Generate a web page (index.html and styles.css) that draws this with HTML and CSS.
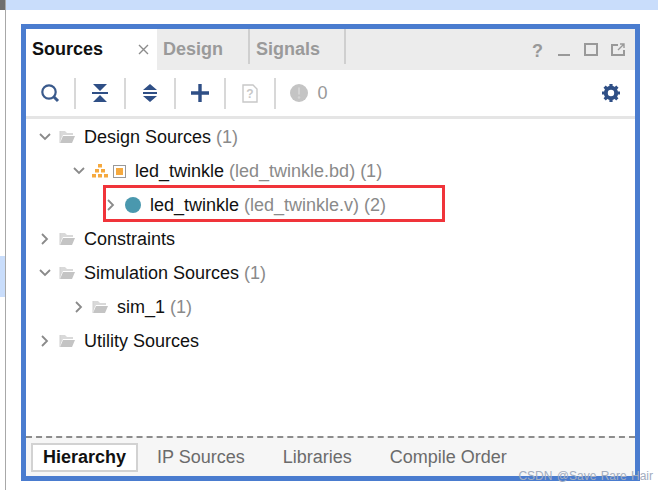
FILE: index.html
```html
<!DOCTYPE html>
<html lang="en">
<head>
    <meta charset="UTF-8">
    <meta name="viewport" content="width=device-width, initial-scale=1.0">
    <title>Sources</title>
    <link rel="stylesheet" href="styles.css">
</head>
<body>
    <svg class="sprites" width="0" height="0">
        <symbol id="folder" viewBox="0 0 17 14">
            <path d="M1 1h5l2 2h6v2H4L1 11z" fill="#d9d9d9"/>
            <path d="M4 6h12l-3 7H1z" fill="#c4c4c4"/>
            <path d="M1 1v12" stroke="#cfcfcf" fill="none"/>
        </symbol>
        <symbol id="open" viewBox="0 0 14 14">
            <path d="M2 4l5 5 5-5" fill="none" stroke="#8a8a8a" stroke-width="1.8"/>
        </symbol>
        <symbol id="closed" viewBox="0 0 14 14">
            <path d="M4 2l5 5-5 5" fill="none" stroke="#8a8a8a" stroke-width="1.8"/>
        </symbol>
    </svg>

    <div class="rail">
        <div class="rail-dark"></div>
        <div class="rail-gap"></div>
        <div class="rail-blue"></div>
    </div>

    <div class="page">
        <div class="top-strip"></div>

        <div class="panel">
            <div class="tabbar">
                <div class="tab active">
                    <span>Sources</span>
                    <svg class="tab-close" width="11" height="11" viewBox="0 0 11 11"><path d="M1 1l9 9M10 1l-9 9" stroke="#8c8c8c" stroke-width="1.4"/></svg>
                </div>
                <div class="tab design">Design</div>
                <div class="tab signals">Signals</div>
                <div class="win-btns">
                    <span class="help">?</span>
                    <svg width="14" height="14" viewBox="0 0 14 14"><path d="M1 12h12" stroke="#999" stroke-width="2"/></svg>
                    <svg width="14" height="14" viewBox="0 0 14 14"><rect x="1" y="1" width="12" height="11" fill="none" stroke="#999" stroke-width="2"/></svg>
                    <svg width="14" height="14" viewBox="0 0 14 14"><path d="M7 2H1v10h12V7" fill="none" stroke="#999" stroke-width="2"/><path d="M7 7l6-6M9 1h4v4" fill="none" stroke="#999" stroke-width="1.4"/></svg>
                </div>
            </div>

            <div class="toolbar">
                <div class="tool">
                    <svg width="20" height="20" viewBox="0 0 20 20"><circle cx="9" cy="9" r="6.7" fill="none" stroke="#3a5a8c" stroke-width="2.2"/><path d="M14 14l4 4" stroke="#3a5a8c" stroke-width="3"/></svg>
                </div>
                <div class="tool">
                    <svg width="16" height="18" viewBox="0 0 16 18"><path d="M1 0h14L8 7zM0 8h16v2H0zM8 11l7 7H1z" fill="#2f4f86"/></svg>
                </div>
                <div class="tool">
                    <svg width="16" height="20" viewBox="0 0 16 20"><path d="M8 1l7 6H1zM1 9h14v2H1zM1 13h14l-7 6z" fill="#2f4f86"/></svg>
                </div>
                <div class="tool">
                    <svg width="20" height="20" viewBox="0 0 20 20"><path d="M10 1v18M1 10h18" stroke="#2f4f86" stroke-width="3.4"/></svg>
                </div>
                <div class="tool">
                    <svg width="16" height="19" viewBox="0 0 16 19"><path d="M1 1h10l4 4v13H1z" fill="none" stroke="#c8c8c8" stroke-width="1.4"/><text x="8" y="14" class="doc-mark">?</text></svg>
                </div>
                <div class="tool last">
                    <svg width="18" height="18" viewBox="0 0 18 18"><circle cx="9" cy="9" r="9" fill="#c4c4c4"/><path d="M9 3.5v7" stroke="#d4d4d4" stroke-width="2"/><circle cx="9" cy="13.5" r="1.2" fill="#d4d4d4"/></svg>
                    <span class="count">0</span>
                </div>
                <svg class="gear" width="20" height="20" viewBox="0 0 20 20">
                    <circle cx="10" cy="10" r="5.2" fill="none" stroke="#2f4f86" stroke-width="4"/>
                    <path d="M10 1v18M1 10h18M3.6 3.6l12.8 12.8M16.4 3.6L3.6 16.4" stroke="#2f4f86" stroke-width="3.2" stroke-dasharray="3.4 11.2"/>
                </svg>
            </div>

            <div class="tree">
                <div class="row">
                    <svg class="chev" width="14" height="14"><use href="#open"/></svg>
                    <svg class="folder" width="17" height="14"><use href="#folder"/></svg>
                    <span class="label">Design Sources</span><span class="note">(1)</span>
                </div>
                <div class="row lvl2">
                    <svg class="chev" width="14" height="14"><use href="#open"/></svg>
                    <svg class="bd-tree" width="16" height="14" viewBox="0 0 16 14"><path d="M6 0h4v3.500H6zM3 5h4v3.500H3zM9 5h4v3.500H9zM0 10h4v3.500H0zM6 10h4v3.500H6zM12 10h4v3.500h-4z" fill="#f5a93f"/></svg>
                    <span class="bd-box"></span>
                    <span class="label">led_twinkle</span><span class="note">(led_twinkle.bd) (1)</span>
                </div>
                <div class="row lvl3">
                    <svg class="chev" width="14" height="14"><use href="#closed"/></svg>
                    <span class="dot"></span>
                    <span class="label">led_twinkle</span><span class="note">(led_twinkle.v) (2)</span>
                </div>
                <div class="row">
                    <svg class="chev" width="14" height="14"><use href="#closed"/></svg>
                    <svg class="folder" width="17" height="14"><use href="#folder"/></svg>
                    <span class="label">Constraints</span>
                </div>
                <div class="row">
                    <svg class="chev" width="14" height="14"><use href="#open"/></svg>
                    <svg class="folder" width="17" height="14"><use href="#folder"/></svg>
                    <span class="label">Simulation Sources</span><span class="note">(1)</span>
                </div>
                <div class="row lvl2">
                    <svg class="chev" width="14" height="14"><use href="#closed"/></svg>
                    <svg class="folder" width="17" height="14"><use href="#folder"/></svg>
                    <span class="label">sim_1</span><span class="note">(1)</span>
                </div>
                <div class="row">
                    <svg class="chev" width="14" height="14"><use href="#closed"/></svg>
                    <svg class="folder" width="17" height="14"><use href="#folder"/></svg>
                    <span class="label">Utility Sources</span>
                </div>
                <div class="callout"></div>
            </div>

            <div class="bottom-tabs">
                <div class="btab active">Hierarchy</div>
                <div class="btab">IP Sources</div>
                <div class="btab">Libraries</div>
                <div class="btab">Compile Order</div>
            </div>
        </div>
    </div>

    <div class="watermark">CSDN @Save Rare Hair</div>
</body>
</html>
```

FILE: styles.css
```css
html, body {
    margin: 0;
    height: 490px;
    overflow: hidden;
}
body {
    display: flex;
    position: relative;
    background: white;
    font-family: "Liberation Sans", Arial, sans-serif;
    font-size: 18px;
    color: #111;
}
.sprites { position: absolute; }

.rail {
    width: 5px;
    flex-shrink: 0;
    border-right: 1px solid #a8a8a8;
    display: flex;
    flex-direction: column;
}
.rail-dark { height: 10px; background: #6e6e6e; }
.rail-gap { height: 246px; }
.rail-blue { height: 41px; background: #c9ddfb; }

.page { flex: 1; min-width: 0; }
.top-strip { height: 10px; background: #c9ddfb; }

.panel {
    box-sizing: border-box;
    width: 619px;
    height: 457px;
    margin: 14px 0 0 15px;
    border: 5px solid #4a7ccf;
    display: flex;
    flex-direction: column;
}

.tabbar {
    height: 41px;
    flex-shrink: 0;
    background: #ececec;
    display: flex;
    font-weight: bold;
}
.tab {
    box-sizing: border-box;
    padding: 10px 0 0 6px;
    color: #9a9a9a;
}
.tab.active {
    width: 131px;
    background: white;
    color: #111;
    display: flex;
    justify-content: space-between;
}
.tab-close { margin: 5px 8px 0 0; }
.tab.design { width: 93px; border-right: 2px solid #cfcfcf; height: 35px; }
.tab.signals { width: 96px; border-right: 2px solid #cfcfcf; height: 35px; }
.win-btns {
    margin-left: auto;
    padding: 14px 10px 0 0;
    display: flex;
    gap: 13px;
    align-items: flex-start;
}
.help { color: #999; line-height: 16px; margin-left: -1px; margin-right: 1px; }

.toolbar {
    height: 49px;
    flex-shrink: 0;
    box-sizing: border-box;
    display: flex;
    align-items: center;
    border-bottom: 3px solid #e5e5e5;
}
.tool {
    width: 50px;
    height: 31px;
    box-sizing: border-box;
    border-right: 2px solid #d8d8d8;
    display: flex;
    align-items: center;
    justify-content: center;
}
.tool.last { border-right: none; width: 66px; gap: 9px; }
.count { color: #999; }
.doc-mark { font-size: 12px; font-weight: bold; fill: #c8c8c8; text-anchor: middle; }
.gear { margin-left: auto; margin-right: 14px; }

.tree {
    flex: 1;
    position: relative;
    padding-top: 1px;
}
.row {
    height: 34px;
    display: flex;
    align-items: center;
    padding-left: 12px;
}
.row.lvl2 { padding-left: 46px; }
.row.lvl3 { padding-left: 78px; }
.chev { flex-shrink: 0; margin-right: 7px; }
.lvl2 .chev { margin-right: 6px; }
.folder { margin-right: 8px; }
.label { white-space: nowrap; }
.note { color: #8a8a8a; margin-left: 5px; white-space: nowrap; }
.bd-tree { margin-right: 5px; }
.bd-box {
    box-sizing: border-box;
    width: 13px;
    height: 13px;
    border: 1px solid #999;
    padding: 2px;
    margin-right: 9px;
    background: #f5a93f content-box;
}
.dot {
    width: 16px;
    height: 16px;
    border-radius: 50%;
    background: #4a98ae;
    margin-right: 9px;
}
.callout {
    position: absolute;
    left: 77px;
    top: 66px;
    width: 342px;
    height: 37px;
    box-sizing: border-box;
    border: 3px solid #f0343a;
}

.bottom-tabs {
    height: 40px;
    flex-shrink: 0;
    box-sizing: border-box;
    border-top: 2px dashed #8c8c8c;
    background: #f6f6f6;
    display: flex;
    align-items: center;
    padding-left: 5px;
}
.btab {
    color: #6b6b6b;
    padding: 0 19px;
}
.btab.active {
    box-sizing: border-box;
    width: 107px;
    height: 29px;
    background: white;
    border: 2px solid #d2d2d2;
    color: #111;
    font-weight: bold;
    line-height: 25px;
    text-align: center;
    padding: 0;
}

.watermark {
    position: absolute;
    right: 5px;
    top: 469px;
    font-size: 12px;
    word-spacing: 1px;
    color: #a3adbf;
}
```
